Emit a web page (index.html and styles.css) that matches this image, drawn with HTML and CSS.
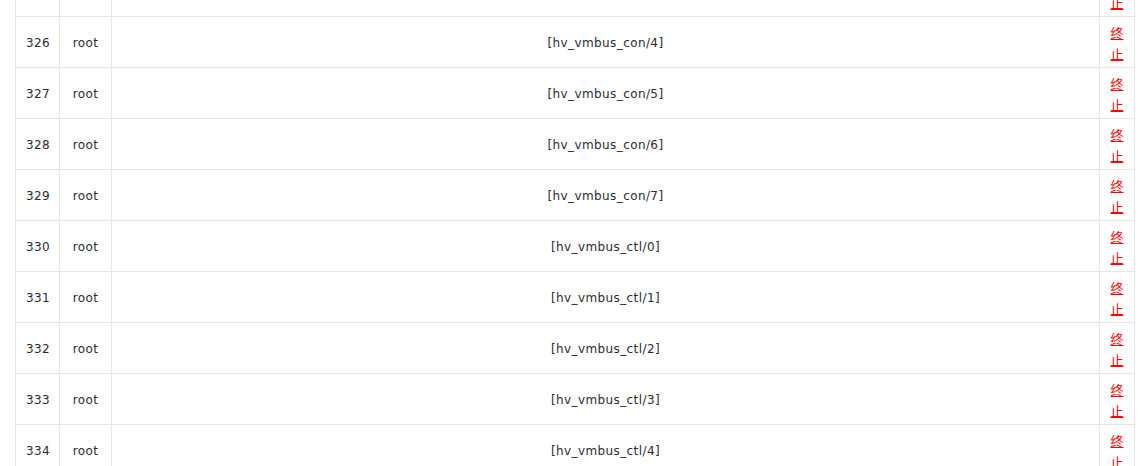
FILE: index.html
```html
<!DOCTYPE html>
<html lang="zh">
<head>
<meta charset="utf-8">
<title>进程列表</title>
<link rel="stylesheet" href="styles.css">
</head>
<body>
<div class="page">
  <table class="proc-table">
    <colgroup>
      <col class="c-pid">
      <col class="c-user">
      <col class="c-cmd">
      <col class="c-act">
    </colgroup>
    <tbody>
      <tr><td>325</td><td>root</td><td>[hv_vmbus_con/3]</td><td class="act"><a href="#">终止</a></td></tr>
      <tr><td>326</td><td>root</td><td>[hv_vmbus_con/4]</td><td class="act"><a href="#">终止</a></td></tr>
      <tr><td>327</td><td>root</td><td>[hv_vmbus_con/5]</td><td class="act"><a href="#">终止</a></td></tr>
      <tr><td>328</td><td>root</td><td>[hv_vmbus_con/6]</td><td class="act"><a href="#">终止</a></td></tr>
      <tr><td>329</td><td>root</td><td>[hv_vmbus_con/7]</td><td class="act"><a href="#">终止</a></td></tr>
      <tr><td>330</td><td>root</td><td>[hv_vmbus_ctl/0]</td><td class="act"><a href="#">终止</a></td></tr>
      <tr><td>331</td><td>root</td><td>[hv_vmbus_ctl/1]</td><td class="act"><a href="#">终止</a></td></tr>
      <tr><td>332</td><td>root</td><td>[hv_vmbus_ctl/2]</td><td class="act"><a href="#">终止</a></td></tr>
      <tr><td>333</td><td>root</td><td>[hv_vmbus_ctl/3]</td><td class="act"><a href="#">终止</a></td></tr>
      <tr><td>334</td><td>root</td><td>[hv_vmbus_ctl/4]</td><td class="act"><a href="#">终止</a></td></tr>
    </tbody>
  </table>
</div>
</body>
</html>
```

FILE: styles.css
```css
html, body {
  margin: 0;
  padding: 0;
  background: #fff;
  overflow: hidden;
}
.page {
  padding-left: 15px;
  height: 466px;
  overflow: hidden;
}
.proc-table {
  margin-top: -35px;
  width: 1120px;
  border-collapse: collapse;
  table-layout: fixed;
  font-family: "DejaVu Sans", Verdana, sans-serif;
  font-size: 12px;
  letter-spacing: 0.4px;
  color: #2b2b33;
}
.c-pid { width: 44px; }
.c-user { width: 52px; }
.c-act { width: 35px; }
.proc-table td {
  border: 1px solid #e6e6e6;
  text-align: center;
  vertical-align: middle;
  padding: 5px 10px 3px;
  line-height: 16px;
}
.proc-table td.act {
  padding: 5px 0 3px;
  letter-spacing: 0;
  line-height: 0;
}
.act a {
  display: inline-block;
  width: 13px;
  vertical-align: top;
  color: #f00;
  text-decoration: underline;
  font-family: "Noto Sans CJK SC", sans-serif;
  font-size: 13px;
  line-height: 21px;
  word-break: break-all;
}
```
